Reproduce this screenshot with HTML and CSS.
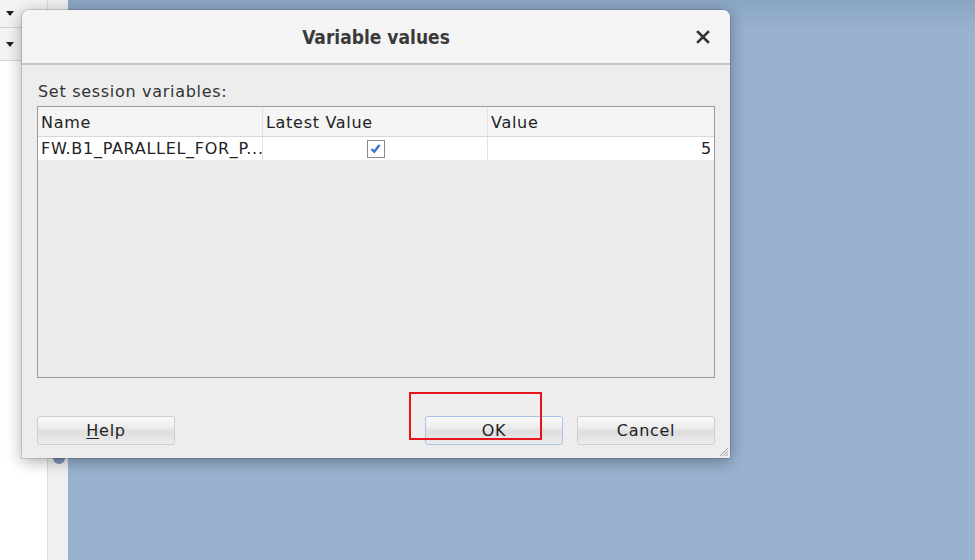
FILE: index.html
```html
<!DOCTYPE html>
<html>
<head>
<meta charset="utf-8">
<link rel="stylesheet" href="styles.css">
</head>
<body>
<div class="desktop">
  <div class="leftpanel">
    <div class="combo"><span class="arrow"></span></div>
    <div class="combo"><span class="arrow"></span></div>
  </div>
  <div class="strip"><span class="knob"></span></div>
  <div class="bluearea"></div>

  <div class="dialog">
    <div class="titlebar">
      <span class="title">Variable values</span>
      <svg class="close" width="14" height="14" viewBox="0 0 14 14"><path d="M2 2 L12 12 M12 2 L2 12" stroke="#333" stroke-width="2.6" stroke-linecap="square"/></svg>
    </div>
    <div class="body">
      <div class="label">Set session variables:</div>
      <div class="table">
        <div class="row head">
          <div class="cell">Name</div>
          <div class="cell">Latest Value</div>
          <div class="cell">Value</div>
        </div>
        <div class="row data">
          <div class="cell">FW.B1_PARALLEL_FOR_P...</div>
          <div class="cell center"><span class="check"><svg width="13" height="13" viewBox="0 0 13 13"><path d="M2.5 7 L5.3 9.8 L10.5 3" fill="none" stroke="#3a74d0" stroke-width="2.4"/></svg></span></div>
          <div class="cell right">5</div>
        </div>
      </div>
      <div class="buttons">
        <div class="btn"><u>H</u>elp</div>
        <div class="spacer"></div>
        <div class="btn focus">OK</div>
        <div class="btn">Cancel</div>
      </div>
    </div>
    <svg class="grip" width="10" height="10" viewBox="0 0 10 10"><path d="M9 1 L1 9 M9 4 L4 9 M9 7 L7 9" stroke="#999" stroke-width="1"/></svg>
  </div>
  <div class="redbox"></div>
</div>
</body>
</html>
```
FILE: styles.css
```css
html, body { margin: 0; padding: 0; }
body { width: 975px; height: 560px; overflow: hidden; font-family: "DejaVu Sans", sans-serif; }
.desktop { position: relative; width: 975px; height: 560px; display: flex; }
.leftpanel { width: 47px; background: #fff; display: flex; flex-direction: column; }
.combo { height: 27px; background: #f3f3f3; border-bottom: 1px solid #d4d4d4; display: flex; align-items: center; padding-left: 6px; }
.combo:nth-child(2) { height: 32px; }
.arrow { width: 0; height: 0; border-left: 4px solid transparent; border-right: 4px solid transparent; border-top: 5px solid #222; }
.strip { width: 20px; background: #f0f0f0; border-left: 1px solid #dcdcdc; position: relative; }
.knob { position: absolute; left: 5px; top: 452px; width: 12px; height: 12px; border-radius: 50%; background: #7d97b3; }
.bluearea { flex: 1; background: linear-gradient(#8aa5c2, #98b2cf 30px, #98b2cf); }
.dialog { position: absolute; left: 22px; top: 10px; width: 708px; height: 448px; background: #ededed; border-radius: 7px 7px 0 0; box-shadow: 0 3px 16px rgba(0,0,0,0.35), 0 0 0 1px rgba(0,0,0,0.12); display: flex; flex-direction: column; }
.titlebar { height: 53px; background: #f4f4f4; border-radius: 7px 7px 0 0; border-bottom: 2px solid #c4c4c4; display: flex; align-items: center; justify-content: center; position: relative; }
.title { font-family: "DejaVu Sans Condensed", "DejaVu Sans", sans-serif; font-stretch: condensed; font-weight: bold; font-size: 19px; color: #3a3a3a; }
.close { position: absolute; right: 20px; top: 20px; }
.body { flex: 1; padding: 15px 15px 0 15px; display: flex; flex-direction: column; }
.label { font-size: 16px; letter-spacing: 0.7px; color: #333; height: 22px; line-height: 24px; margin-left: 1px; }
.table { height: 270px; border: 1px solid #9a9a9a; background: #ebebeb; margin-top: 4px; }
.row { display: grid; grid-template-columns: 225px 225px 1fr; }
.head { height: 29px; background: #f5f5f5; border-bottom: 1px solid #d8d8d8; }
.head .cell { line-height: 31px; }
.data { height: 23px; background: #fff; }
.cell { font-size: 16px; letter-spacing: 0.7px; color: #222; padding: 0 3px; border-right: 1px solid #e2e2e2; line-height: 23px; white-space: nowrap; overflow: hidden; }
.cell:last-child { border-right: none; }
.center { display: flex; justify-content: center; align-items: center; }
.right { text-align: right; padding-right: 2px; }
.check { width: 16px; height: 16px; border: 1px solid #8a8a8a; background: #fff; display: flex; align-items: center; justify-content: center; margin-left: 1px; }
.buttons { display: flex; margin-top: 38px; gap: 14px; }
.spacer { flex: 1; }
.btn { width: 136px; height: 27px; border: 1px solid #cfcfcf; border-radius: 3px; background: linear-gradient(#fafafa, #ececec 40%, #dedede 55%, #ececec); font-size: 16px; letter-spacing: 0.7px; color: #222; text-align: center; line-height: 27px; }
.btn u { text-underline-offset: 2px; }
.btn.focus { border-color: #a7c4e6; }
.grip { position: absolute; right: 1px; bottom: 1px; }
.redbox { position: absolute; left: 409px; top: 392px; width: 129px; height: 44px; border: 2px solid #e8141b; }
```
